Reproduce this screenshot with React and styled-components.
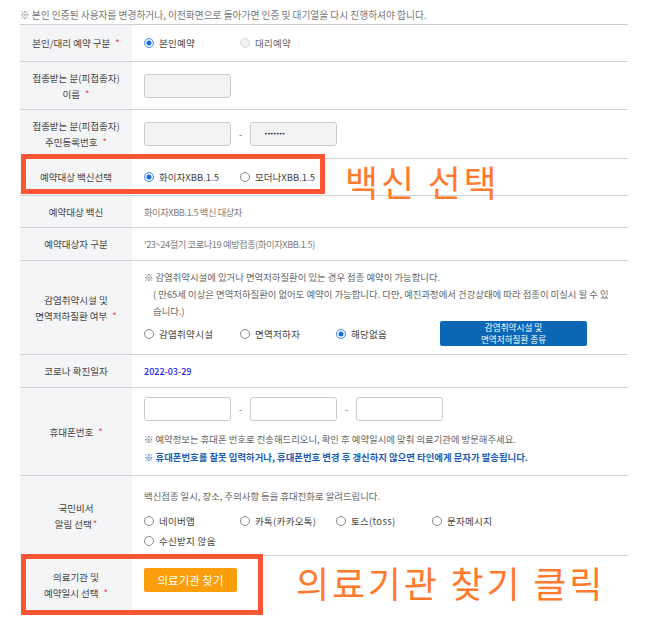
import React from "react";
import styled, { createGlobalStyle } from "styled-components";

const GlobalStyle = createGlobalStyle`
  html, body { margin: 0; padding: 0; background: #fff; }
  body { font-family: "Noto Sans CJK KR", "Noto Sans", sans-serif; color: #333; }
  * { box-sizing: border-box; }
`;

const Page = styled.div`
  position: relative;
  width: 658px;
  height: 622px;
  padding: 8px 30px 0 20px;
  overflow: hidden;
`;

const TopNote = styled.p`
  margin: 0;
  height: 16px;
  line-height: 14px;
  font-size: 9.7px;
  color: #777;
  white-space: nowrap;
`;

const Table = styled.div`
  border-top: 1px solid #cfcfd3;
  display: flex;
  flex-direction: column;
`;

const Row = styled.div`
  display: flex;
  height: ${(p) => p.$h}px;
  border-bottom: ${(p) => (p.$last ? "none" : "1px solid #d3d3d7")};
`;

const Label = styled.div`
  width: 112px;
  flex: none;
  background: #f4f5f7;
  display: flex;
  align-items: center;
  justify-content: center;
  text-align: center;
  font-size: 9.5px;
  line-height: 16px;
  color: #444;
`;

const Req = styled.span`
  color: #e2453c;
  margin-left: ${(p) => (p.$tight ? 1 : 5)}px;
`;

const Content = styled.div`
  flex: 1;
  min-width: 0;
  display: flex;
  flex-direction: column;
  justify-content: ${(p) => (p.$top ? "flex-start" : "center")};
  padding: ${(p) => p.$pad || "0"};
  padding-left: 12px;
  padding-right: 12px;
  font-size: 9.5px;
  color: #666;
`;

const Line = styled.div`
  display: flex;
  align-items: center;
  margin-top: ${(p) => p.$mt || 0}px;
`;

const RadioList = styled.div`
  display: ${(p) => (p.$grid ? "grid" : "flex")};
  grid-template-columns: repeat(4, 96px);
  grid-auto-rows: 20px;
  align-items: center;
  margin-top: ${(p) => p.$mt || 0}px;
`;

const RadioItem = styled.label`
  width: 96px;
  display: inline-flex;
  align-items: center;
  gap: 5px;
  font-size: 9.5px;
  color: ${(p) => (p.$disabled ? "#666" : "#444")};
  letter-spacing: ${(p) => (p.$narrow ? "0" : "0.3px")};
  white-space: nowrap;
`;

const RadioDot = styled.span`
  width: 10px;
  height: 10px;
  flex: none;
  border-radius: 50%;
  border: 1px solid
    ${(p) => (p.$checked ? "#5b9bf0" : p.$disabled ? "#d8d8d8" : "#8a8a8a")};
  background: ${(p) =>
    p.$checked ? "#1a6fe0" : p.$disabled ? "#f1f1f1" : "#fff"};
  box-shadow: ${(p) => (p.$checked ? "inset 0 0 0 1.5px #fff" : "none")};
`;

const Radio = ({ checked, disabled, narrow, children }) => (
  <RadioItem $disabled={disabled} $narrow={narrow}>
    <RadioDot $checked={checked} $disabled={disabled} />
    {children}
  </RadioItem>
);

const Input = styled.div`
  width: 87px;
  height: 24px;
  flex: none;
  border: 1px solid #cbcbcf;
  border-radius: 3px;
  background: ${(p) => (p.$white ? "#fff" : "#f3f3f4")};
  display: flex;
  align-items: center;
  padding-left: 13px;
`;

const Masked = styled.span`
  font-size: 6.5px;
  letter-spacing: -0.9px;
  color: #2a3550;
  font-family: "DejaVu Sans", sans-serif;
`;

const Dash = styled.span`
  width: 19px;
  text-align: center;
  color: #666;
  font-size: 9px;
`;

const Plain = styled.div`
  font-size: ${(p) => (p.$color ? "9px" : "9.3px")};
  letter-spacing: ${(p) => (p.$color ? "0" : "-0.45px")};
  color: ${(p) => p.$color || "#808080"};
  font-weight: ${(p) => p.$weight || 400};
  white-space: nowrap;
`;

const Notes = styled.div`
  font-size: 9.4px;
  line-height: 17px;
  color: #666;
  margin-top: ${(p) => p.$mt || 0}px;
`;

const NoteLine = styled.div`
  white-space: nowrap;
  padding-left: ${(p) => (p.$indent ? "9px" : "0")};
  color: ${(p) => p.$color || "inherit"};
  font-weight: ${(p) => p.$weight || 400};
  line-height: ${(p) => p.$lh || 17}px;
`;

const BlueButton = styled.button`
  margin-left: 8px;
  width: 147px;
  height: 25px;
  border: none;
  border-radius: 2px;
  background: #0b67b5;
  color: #fff;
  font-family: inherit;
  font-size: 8.6px;
  line-height: 11.5px;
  padding: 0;
  display: flex;
  flex-direction: column;
  align-items: center;
  justify-content: center;
`;

const OrangeButton = styled.button`
  width: 93px;
  height: 24px;
  border: none;
  border-radius: 2px;
  background: #fb9e0b;
  color: #fff;
  font-family: inherit;
  font-size: 11.5px;
  padding: 0;
`;

const Highlight = styled.div`
  position: absolute;
  left: ${(p) => p.$x}px;
  top: ${(p) => p.$y}px;
  width: ${(p) => p.$w}px;
  height: ${(p) => p.$hh}px;
  border: 5px solid #ff5533;
  pointer-events: none;
`;

const Annotation = styled.div`
  position: absolute;
  left: ${(p) => p.$x}px;
  top: ${(p) => p.$y}px;
  font-size: 36px;
  line-height: 36px;
  letter-spacing: 2.8px;
  color: #ff7a2e;
  white-space: nowrap;
`;

export default function App() {
  return (
    <>
      <GlobalStyle />
      <Page>
        <TopNote>
          ※ 본인 인증된 사용자를 변경하거나, 이전화면으로 돌아가면 인증 및 대기열을 다시 진행하셔야 합니다.
        </TopNote>
        <Table>
          <Row $h={37}>
            <Label>
              <span>
                본인/대리 예약 구분<Req>*</Req>
              </span>
            </Label>
            <Content>
              <RadioList>
                <Radio checked>본인예약</Radio>
                <Radio disabled>대리예약</Radio>
              </RadioList>
            </Content>
          </Row>
          <Row $h={48}>
            <Label>
              <span>
                접종받는 분(피접종자)
                <br />
                이름<Req>*</Req>
              </span>
            </Label>
            <Content>
              <Line>
                <Input />
              </Line>
            </Content>
          </Row>
          <Row $h={49}>
            <Label>
              <span>
                접종받는 분(피접종자)
                <br />
                주민등록번호<Req>*</Req>
              </span>
            </Label>
            <Content>
              <Line>
                <Input />
                <Dash>-</Dash>
                <Input>
                  <Masked>•••••••</Masked>
                </Input>
              </Line>
            </Content>
          </Row>
          <Row $h={37}>
            <Label>예약대상 백신선택</Label>
            <Content>
              <RadioList>
                <Radio checked narrow>화이자XBB.1.5</Radio>
                <Radio narrow>모더나XBB.1.5</Radio>
              </RadioList>
            </Content>
          </Row>
          <Row $h={32}>
            <Label>예약대상 백신</Label>
            <Content>
              <Plain>화이자XBB.1.5 백신 대상자</Plain>
            </Content>
          </Row>
          <Row $h={33}>
            <Label>예약대상자 구분</Label>
            <Content>
              <Plain>'23~24절기 코로나19 예방접종(화이자XBB.1.5)</Plain>
            </Content>
          </Row>
          <Row $h={94}>
            <Label>
              <span>
                감염취약시설 및
                <br />
                면역저하질환 여부<Req>*</Req>
              </span>
            </Label>
            <Content $top $pad="8px 0">
              <Notes>
                <NoteLine>※ 감염취약시설에 있거나 면역저하질환이 있는 경우 접종 예약이 가능합니다.</NoteLine>
                <NoteLine $indent>
                  ( 만65세 이상은 면역저하질환이 없어도 예약이 가능합니다. 다만, 예진과정에서 건강상태에 따라 접종이 미실시 될 수 있
                </NoteLine>
                <NoteLine $indent>습니다.)</NoteLine>
              </Notes>
              <Line $mt={1}>
                <Radio>감염취약시설</Radio>
                <Radio>면역저하자</Radio>
                <Radio checked>해당없음</Radio>
                <BlueButton>
                  <span>감염취약시설 및</span>
                  <span>면역저하질환 종류</span>
                </BlueButton>
              </Line>
            </Content>
          </Row>
          <Row $h={33}>
            <Label>코로나 확진일자</Label>
            <Content>
              <Plain $color="#2424f0" $weight={500}>
                2022-03-29
              </Plain>
            </Content>
          </Row>
          <Row $h={88}>
            <Label>
              <span>
                휴대폰번호<Req>*</Req>
              </span>
            </Label>
            <Content $top $pad="9px 0 0">
              <Line>
                <Input $white />
                <Dash>-</Dash>
                <Input $white />
                <Dash>-</Dash>
                <Input $white />
              </Line>
              <Notes $mt={9}>
                <NoteLine $lh={18}>
                  ※ 예약정보는 휴대폰 번호로 전송해드리오니, 확인 후 예약일시에 맞춰 의료기관에 방문해주세요.
                </NoteLine>
                <NoteLine $lh={18} $color="#1a5cb0" $weight={700}>
                  ※ 휴대폰번호를 잘못 입력하거나, 휴대폰번호 변경 후 갱신하지 않으면 타인에게 문자가 발송됩니다.
                </NoteLine>
              </Notes>
            </Content>
          </Row>
          <Row $h={80}>
            <Label>
              <span>
                국민비서
                <br />
                알림 선택<Req $tight>*</Req>
              </span>
            </Label>
            <Content $top $pad="12px 0 0">
              <Notes>
                <NoteLine>백신접종 일시, 장소, 주의사항 등을 휴대전화로 알려드립니다.</NoteLine>
              </Notes>
              <RadioList $grid $mt={6}>
                <Radio>네이버앱</Radio>
                <Radio>카톡(카카오톡)</Radio>
                <Radio>토스(toss)</Radio>
                <Radio>문자메시지</Radio>
                <Radio>수신받지 않음</Radio>
              </RadioList>
            </Content>
          </Row>
          <Row $h={57} $last>
            <Label>
              <span>
                의료기관 및
                <br />
                예약일시 선택<Req>*</Req>
              </span>
            </Label>
            <Content $top $pad="12px 0 0">
              <Line>
                <OrangeButton>의료기관 찾기</OrangeButton>
              </Line>
            </Content>
          </Row>
        </Table>

        <Highlight $x={21} $y={154} $w={304} $hh={40} />
        <Highlight $x={21} $y={554} $w={242} $hh={61} />
        <Annotation $x={345} $y={163}>백신 선택</Annotation>
        <Annotation $x={296} $y={564}>의료기관 찾기 클릭</Annotation>
      </Page>
    </>
  );
}
